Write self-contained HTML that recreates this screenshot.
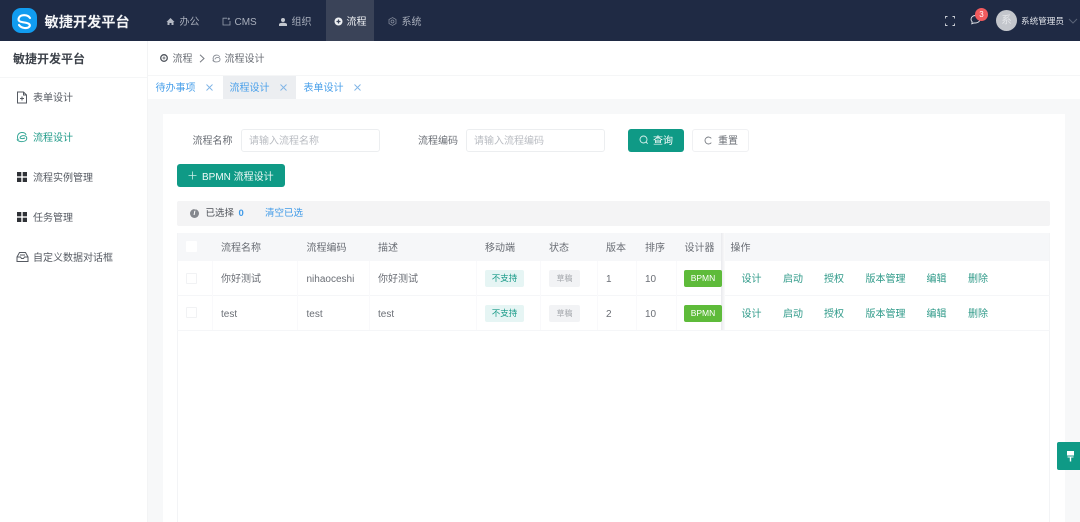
<!DOCTYPE html>
<html lang="zh"><head><meta charset="utf-8"><title>敏捷开发平台</title>
<style>
*{box-sizing:border-box}
html,body{margin:0;padding:0;width:1080px;height:522px;overflow:hidden;background:#fff}
body{position:relative;font-family:"Liberation Sans","Noto Sans CJK SC",sans-serif;font-size:10px;color:#606266}
.a{position:absolute;white-space:nowrap}
.t{position:absolute;white-space:nowrap;line-height:14px;height:14px;margin-top:2px}
svg{position:absolute;display:block}
.nav{color:#a9afbc;top:14px}
.side{color:#555a62;left:33px}
.tab{color:#4aa0ea;top:80px}
.th{top:240px;color:#6a6e75}
.td{color:#6a6e75}
.op{color:#2f9a89}
.tag{position:absolute;height:17px;line-height:17px;text-align:center;border-radius:2px;font-size:8.5px}
.g{background:#e6f5f4;color:#179a87;left:485px;width:39px}
.d{background:#f2f3f5;color:#a3a6ab;left:549px;width:31px;font-size:8px}
.b{background:#5ebb3a;color:#fff;left:684px;width:38px;font-size:8.5px}
.cb{position:absolute;left:186px;width:11px;height:11px;border:1px solid #f1f2f4;background:#fff;border-radius:1px}
.ln{position:absolute;background:#f5f6f8}
.vl{position:absolute;background:#f9f9fb}
</style></head><body>

<!-- top bar -->
<div class="a" style="left:0;top:0;width:1080px;height:41px;background:#1f2a44"></div>
<div class="a" style="left:326px;top:0;width:48px;height:41px;background:#3a4358"></div>
<div class="a" style="left:12px;top:8px;width:25px;height:25px;border-radius:9px;background:#119cf0"></div>
<svg style="left:12px;top:8px" width="25" height="25" viewBox="0 0 25 25" fill="none"><path d="M18 10C16 6.500 8.500 6 6.800 10C5.500 13.500 9 14 12.500 14.500C16 15 18.800 16 17.500 18.500C15.500 21 9.500 20.500 7 17" stroke="#fff" stroke-width="2.100" stroke-linecap="round"/></svg>
<div class="t" style="left:44.500px;top:11px;height:20px;line-height:20px;font-size:14.200px;font-weight:700;color:#f4f5f7">敏捷开发平台</div>

<svg style="left:166px;top:17px" width="9" height="9" viewBox="0 0 9 9"><path d="M4.500 1L8.500 5H7.500V8H5.500V6H3.500V8H1.500V5H.5Z" fill="#b4b9c4"/></svg>
<div class="t nav" style="left:179.500px">办公</div>
<svg style="left:222px;top:17px" width="9" height="9" viewBox="0 0 9 9" fill="none" stroke="#98a0af" stroke-width=".8"><path d="M5 1.200H1V8H8V4M6.800 .6V3M5.600 1.800H8"/></svg>
<div class="t nav" style="left:234.500px">CMS</div>
<svg style="left:278px;top:16.500px" width="10" height="10" viewBox="0 0 10 10"><circle cx="5" cy="3" r="2" fill="#c3c7cf"/><path d="M1 9V7.500C1 6.300 3 5.800 5 5.800S9 6.300 9 7.500V9Z" fill="#c3c7cf"/></svg>
<div class="t nav" style="left:291.500px">组织</div>
<svg style="left:333.500px;top:16.500px" width="9" height="9" viewBox="0 0 9 9"><circle cx="4.500" cy="4.500" r="4" fill="#eef0f3"/><path d="M4.500 2.500V6.500M2.500 4.500H6.500" stroke="#3a4358" stroke-width="1.300"/></svg>
<div class="t nav" style="left:346.500px;color:#f1f3f6">流程</div>
<svg style="left:388px;top:16.500px" width="9" height="9" viewBox="0 0 9 9" fill="none" stroke="#8e95a4" stroke-width=".7"><path d="M4.500 .6L8 2.500V6.500L4.500 8.400L1 6.500V2.500Z"/><circle cx="4.500" cy="4.500" r="1.500"/></svg>
<div class="t nav" style="left:401.500px">系统</div>

<svg style="left:945px;top:16px" width="10" height="10" viewBox="0 0 10 10" fill="none" stroke="#cfd2d9" stroke-width=".9"><path d="M.5 2.500V.5H2.500M7.500 .5H9.500V2.500M9.500 7.500V9.500H7.500M2.500 9.500H.5V7.500"/></svg>
<svg style="left:970px;top:14px" width="11" height="11" viewBox="0 0 11 11" fill="none" stroke="#dfe2e8" stroke-width=".9"><path d="M5.500 1.500C2.800 1.500 1 3.200 1 5.300C1 6.300 1.400 7.200 2.200 7.900L1.800 9.800L4 8.900C6.800 9.400 10 7.900 10 5.300"/></svg>
<div class="a" style="left:975px;top:8px;width:13px;height:13px;border-radius:50%;background:#f15b5e;color:#fff;font-size:8px;line-height:13px;text-align:center">3</div>
<div class="a" style="left:996px;top:10px;width:21px;height:21px;border-radius:50%;background:#c3c6cc;color:#e4e6e9;font-size:10.500px;line-height:21px;text-align:center">系</div>
<div class="t" style="left:1021px;top:11.500px;font-size:8.600px;color:#dfe2e8">系统管理员</div>
<svg style="left:1068px;top:18px" width="10" height="6" viewBox="0 0 10 6" fill="none" stroke="#5b6478"><path d="M1 1L5 5L9 1"/></svg>

<!-- sidebar -->
<div class="a" style="left:147px;top:41px;width:1px;height:481px;background:#f3f4f5"></div>
<div class="a" style="left:0;top:77px;width:147px;height:1px;background:#f5f6f7"></div>
<div class="t" style="left:13px;top:50px;font-size:12px;font-weight:700;color:#3d424a">敏捷开发平台</div>

<svg style="left:16px;top:91px" width="12" height="13" viewBox="0 0 12 13" fill="none" stroke="#555a62" stroke-width="1"><path d="M7.500 1H1.500V12H10.500V4Z M7.500 1V4H10.500M6 5.500V9.500M4 7.500H8"/></svg>
<div class="t side" style="top:90px">表单设计</div>
<svg style="left:16px;top:131px" width="12" height="12" viewBox="0 0 12 12" fill="none" stroke="#36a797" stroke-width="1"><path d="M2.500 9C.5 6.500 1.500 2 5.500 1.500C8 1.300 9.800 2.500 10 4M4 7.200C4 5.300 6 4.500 8 4.600C9.900 4.700 11 6 10.700 7.800C10.300 10 7.500 10.800 4.500 10.500C3 10.300 1.500 9.500 1 8.300M4 7.200C5.500 7.700 7.500 7.700 9 7"/></svg>
<div class="t side" style="top:130px;color:#1f9a88">流程设计</div>
<svg style="left:17px;top:172px" width="10" height="10" viewBox="0 0 10 10" fill="#2f3237"><rect width="4.300" height="4.300"/><rect x="5.700" width="4.300" height="4.300"/><rect y="5.700" width="4.300" height="4.300"/><rect x="5.700" y="5.700" width="4.300" height="4.300"/></svg>
<div class="t side" style="top:170px">流程实例管理</div>
<svg style="left:17px;top:212px" width="10" height="10" viewBox="0 0 10 10" fill="#2f3237"><rect width="4.300" height="4.300"/><rect x="5.700" width="4.300" height="4.300"/><rect y="5.700" width="4.300" height="4.300"/><rect x="5.700" y="5.700" width="4.300" height="4.300"/></svg>
<div class="t side" style="top:210px">任务管理</div>
<svg style="left:15.500px;top:251px" width="13" height="12" viewBox="0 0 13 12" fill="none" stroke="#555a62" stroke-width="1"><path d="M1 6L3.500 1.500H9.500L12 6V10.500H1Z M1 6H4.500L5.500 7.500H7.500L8.500 6H12M4 4H9"/></svg>
<div class="t side" style="top:250px">自定义数据对话框</div>

<!-- breadcrumb -->
<div class="a" style="left:148px;top:75px;width:932px;height:1px;background:#f5f6f7"></div>
<svg style="left:160px;top:54px" width="8" height="8" viewBox="0 0 8 8"><circle cx="4" cy="4" r="3.300" fill="none" stroke="#50555d" stroke-width="1.300"/><path d="M4 2.500V5.500M2.500 4H5.500" stroke="#50555d" stroke-width=".8"/></svg>
<div class="t" style="left:172.500px;top:51px;color:#6a6e75">流程</div>
<svg style="left:199px;top:54px" width="6" height="9" viewBox="0 0 6 9" fill="none" stroke="#777b82"><path d="M1 .8L5 4.500L1 8.200"/></svg>
<svg style="left:212px;top:54px" width="9" height="9" viewBox="0 0 12 12" fill="none" stroke="#8b9098" stroke-width="1.200"><path d="M2.500 9C.5 6.500 1.500 2 5.500 1.500C8 1.300 9.800 2.500 10 4M4 7.200C4 5.300 6 4.500 8 4.600C9.900 4.700 11 6 10.700 7.800C10.300 10 7.500 10.800 4.500 10.500C3 10.300 1.500 9.500 1 8.300"/></svg>
<div class="t" style="left:224.500px;top:51px;color:#6a6e75">流程设计</div>

<!-- tabs -->
<div class="a" style="left:223px;top:76px;width:73px;height:23px;background:#eceef1"></div>
<div class="t tab" style="left:155.500px">待办事项</div>
<svg style="left:205.500px;top:84px" width="7" height="7" viewBox="0 0 7 7" stroke="#7fb4e6" stroke-width=".9"><path d="M.5 .5L6.500 6.500M6.500 .5L.5 6.500"/></svg>
<div class="t tab" style="left:229.500px">流程设计</div>
<svg style="left:279.500px;top:84px" width="7" height="7" viewBox="0 0 7 7" stroke="#7fb4e6" stroke-width=".9"><path d="M.5 .5L6.500 6.500M6.500 .5L.5 6.500"/></svg>
<div class="t tab" style="left:303.500px">表单设计</div>
<svg style="left:353.500px;top:84px" width="7" height="7" viewBox="0 0 7 7" stroke="#7fb4e6" stroke-width=".9"><path d="M.5 .5L6.500 6.500M6.500 .5L.5 6.500"/></svg>

<!-- content bg -->
<div class="a" style="left:148px;top:99px;width:932px;height:423px;background:#f7f8f9"></div>
<div class="a" style="left:163px;top:114px;width:902px;height:408px;background:#fff"></div>

<!-- form -->
<div class="t" style="left:192.500px;top:133px;color:#6a6e75">流程名称</div>
<div class="a" style="left:241px;top:129px;width:139px;height:23px;border:1px solid #eceef0;border-radius:3px"></div>
<div class="t" style="left:249px;top:133px;color:#b9bcc2">请输入流程名称</div>
<div class="t" style="left:418px;top:133px;color:#6a6e75">流程编码</div>
<div class="a" style="left:466px;top:129px;width:139px;height:23px;border:1px solid #eceef0;border-radius:3px"></div>
<div class="t" style="left:474px;top:133px;color:#b9bcc2">请输入流程编码</div>
<div class="a" style="left:628px;top:129px;width:56px;height:23px;background:#0f9a86;border-radius:3px"></div>
<svg style="left:639px;top:135px" width="10" height="10" viewBox="0 0 10 10" fill="none" stroke="#d6f0ec" stroke-width=".9"><circle cx="4.500" cy="4.500" r="3.500"/><path d="M7 7L8.700 8.700"/></svg>
<div class="t" style="left:653px;top:133px;color:#fff">查询</div>
<div class="a" style="left:692px;top:129px;width:57px;height:23px;border:1px solid #f0f1f3;border-radius:3px"></div>
<svg style="left:704px;top:136px" width="9" height="9" viewBox="0 0 9 9" fill="none" stroke="#777b82" stroke-width=".9"><path d="M7.300 2.400A3.500 3.500 0 1 0 7.300 6.600"/></svg>
<div class="t" style="left:718px;top:133px;color:#6a6e75">重置</div>

<div class="a" style="left:177px;top:164px;width:108px;height:23px;background:#0f9a86;border-radius:3px"></div>
<svg style="left:188px;top:171px" width="9" height="9" viewBox="0 0 9 9" stroke="#cdeee8" stroke-width=".8"><path d="M4.500 .5V8.500M.5 4.500H8.500"/></svg>
<div class="t" style="left:202px;top:169px;color:#f0faf8">BPMN 流程设计</div>

<!-- alert -->
<div class="a" style="left:177px;top:201px;width:873px;height:25px;background:#f4f4f5;border-radius:2px"></div>
<div class="a" style="left:190px;top:209px;width:9px;height:9px;border-radius:50%;background:#85888e;color:#fff;font-size:7px;line-height:9px;text-align:center;font-style:italic;font-weight:700">i</div>
<div class="t" style="left:205.500px;top:205px;font-size:9.500px;color:#4d5158">已选择</div>
<div class="t" style="left:238.500px;top:205px;font-size:9.500px;font-weight:700;color:#3f9ae8">0</div>
<div class="t" style="left:265px;top:205px;font-size:9.500px;color:#3f9ae8">清空已选</div>

<!-- table -->
<div class="a" style="left:177px;top:233px;width:873px;height:28px;background:#f6f7f9"></div>
<div class="a" style="left:177px;top:233px;width:1px;height:289px;background:#f3f4f6"></div>
<div class="a" style="left:1049px;top:233px;width:1px;height:289px;background:#f3f4f6"></div>
<div class="ln" style="left:177px;top:295px;width:873px;height:1px"></div>
<div class="ln" style="left:177px;top:330px;width:873px;height:1px"></div>
<div class="vl" style="left:212px;top:261px;width:1px;height:69px"></div>
<div class="vl" style="left:297px;top:261px;width:1px;height:69px"></div>
<div class="vl" style="left:369px;top:261px;width:1px;height:69px"></div>
<div class="vl" style="left:476px;top:261px;width:1px;height:69px"></div>
<div class="vl" style="left:540px;top:261px;width:1px;height:69px"></div>
<div class="vl" style="left:597px;top:261px;width:1px;height:69px"></div>
<div class="vl" style="left:636px;top:261px;width:1px;height:69px"></div>
<div class="vl" style="left:676px;top:261px;width:1px;height:69px"></div>
<div class="a" style="left:721px;top:233px;width:4px;height:97px;background:linear-gradient(90deg,#e9eaed,#fbfbfc)"></div>

<div class="a" style="left:186px;top:241px;width:11px;height:11px;background:#fff;border-radius:1px"></div>
<div class="t th" style="left:221px">流程名称</div>
<div class="t th" style="left:306.500px">流程编码</div>
<div class="t th" style="left:378px">描述</div>
<div class="t th" style="left:485px">移动端</div>
<div class="t th" style="left:549px">状态</div>
<div class="t th" style="left:606px">版本</div>
<div class="t th" style="left:645px">排序</div>
<div class="t th" style="left:684.500px">设计器</div>
<div class="t th" style="left:730.500px">操作</div>

<div class="cb" style="top:273px"></div>
<div class="t td" style="left:221px;top:271px">你好测试</div>
<div class="t td" style="left:306.500px;top:271px">nihaoceshi</div>
<div class="t td" style="left:378px;top:271px">你好测试</div>
<div class="tag g" style="top:270px">不支持</div>
<div class="tag d" style="top:270px">草稿</div>
<div class="t td" style="left:606px;top:271px">1</div>
<div class="t td" style="left:645px;top:271px">10</div>
<div class="tag b" style="top:270px">BPMN</div>
<div class="t op" style="left:741.500px;top:271px">设计</div>
<div class="t op" style="left:783px;top:271px">启动</div>
<div class="t op" style="left:824px;top:271px">授权</div>
<div class="t op" style="left:865.500px;top:271px">版本管理</div>
<div class="t op" style="left:926.500px;top:271px">编辑</div>
<div class="t op" style="left:968px;top:271px">删除</div>

<div class="cb" style="top:307px"></div>
<div class="t td" style="left:221px;top:306px">test</div>
<div class="t td" style="left:306.500px;top:306px">test</div>
<div class="t td" style="left:378px;top:306px">test</div>
<div class="tag g" style="top:305px">不支持</div>
<div class="tag d" style="top:305px">草稿</div>
<div class="t td" style="left:606px;top:306px">2</div>
<div class="t td" style="left:645px;top:306px">10</div>
<div class="tag b" style="top:305px">BPMN</div>
<div class="t op" style="left:741.500px;top:306px">设计</div>
<div class="t op" style="left:783px;top:306px">启动</div>
<div class="t op" style="left:824px;top:306px">授权</div>
<div class="t op" style="left:865.500px;top:306px">版本管理</div>
<div class="t op" style="left:926.500px;top:306px">编辑</div>
<div class="t op" style="left:968px;top:306px">删除</div>

<!-- floating -->
<div class="a" style="left:1057px;top:442px;width:23px;height:28px;background:#0f9a86;border-radius:2px 0 0 2px"></div>
<svg style="left:1066px;top:451px" width="10" height="11" viewBox="0 0 10 11" fill="#fff"><path d="M1 0H8V4.500H1ZM1.500 5.500H7.500V6.500H5.200V10.500H3.800V6.500H1.500Z"/></svg>
</body></html>
